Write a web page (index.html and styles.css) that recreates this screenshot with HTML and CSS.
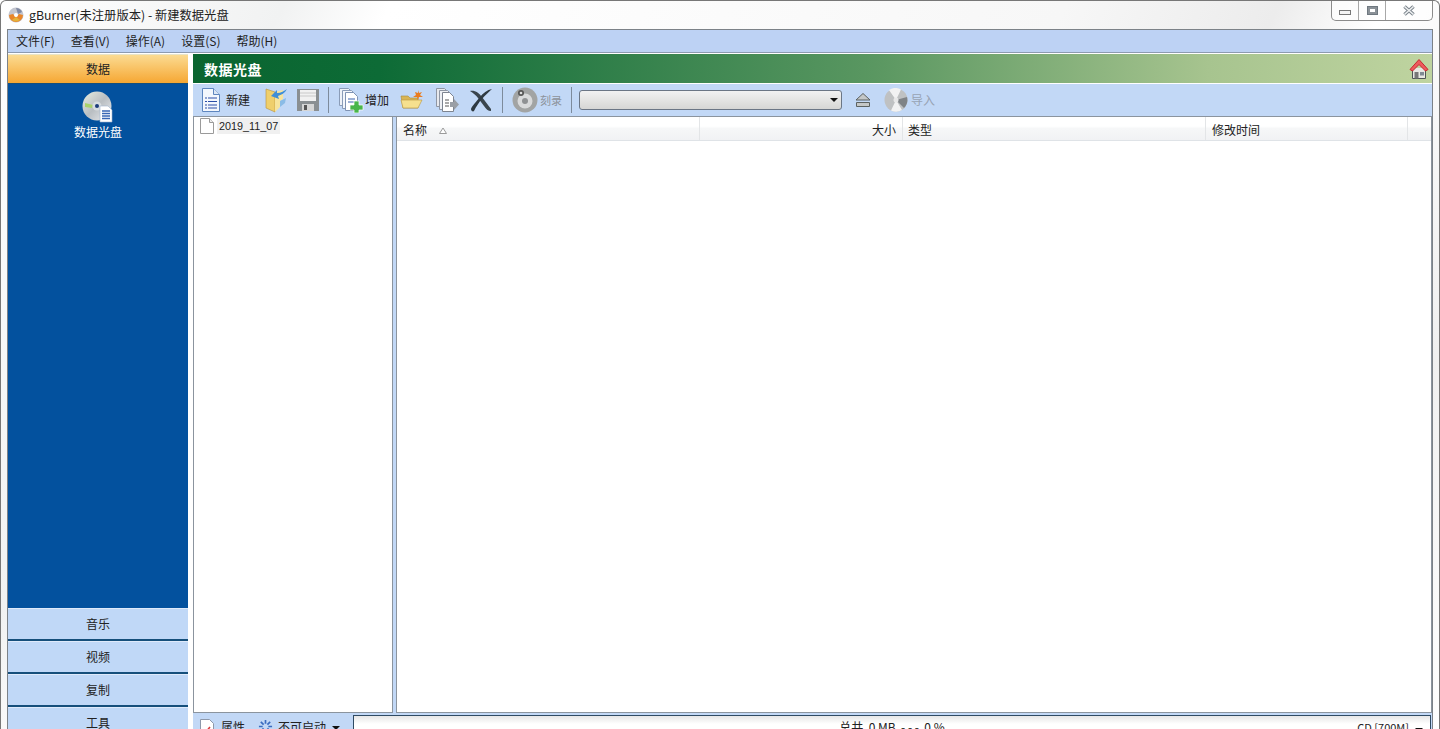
FILE: index.html
```html
<!DOCTYPE html>
<html lang="zh-CN">
<head>
    <meta charset="UTF-8">
    <title>gBurner</title>
    <link rel="stylesheet" href="styles.css">
</head>
<body>
    <div class="window">
        <div class="titlebar">
            <svg class="app-icon" viewBox="0 0 16 16" width="16" height="16">
                <circle cx="8" cy="8" r="7.500" fill="#c4c6cf"/>
                <path d="M1 8a7 7 0 0 0 14 0l-4-1-3 3-3-3z" fill="#e8862a"/>
                <path d="M4 13a7 7 0 0 0 8 0l-4-3z" fill="#e4b23a"/>
                <path d="M8 1a7 7 0 0 1 6 4l-4 2z" fill="#7f89a3"/>
                <circle cx="8" cy="8" r="2" fill="#fff"/>
            </svg>
            <span class="title-text">gBurner(未注册版本) - 新建数据光盘</span>
            <div class="win-btns">
                <div class="win-btn btn-min"><span class="glyph-min"></span></div>
                <div class="win-btn btn-max"><span class="glyph-max"></span></div>
                <div class="win-btn btn-close">
                    <svg viewBox="0 0 14 11" width="14" height="11"><path d="M2.500 1.500l9 8M11.500 1.500l-9 8" stroke="#7b848c" stroke-width="3.600" fill="none"/><path d="M2.500 1.500l9 8M11.500 1.500l-9 8" stroke="#eef0f1" stroke-width="1.600" fill="none"/></svg>
                </div>
            </div>
        </div>

        <div class="frame">
            <div class="menubar">
                <span>文件(F)</span>
                <span>查看(V)</span>
                <span>操作(A)</span>
                <span>设置(S)</span>
                <span>帮助(H)</span>
            </div>

            <div class="main">
                <div class="sidebar">
                    <div class="side-head">数据</div>
                    <div class="side-panel">
                        <svg class="disc-icon" viewBox="0 0 32 32" width="32" height="32">
                            <defs>
                                <linearGradient id="discFill" x1="0" y1="0" x2="1" y2="1">
                                    <stop offset="0" stop-color="#e9efe2"/>
                                    <stop offset="0.5" stop-color="#b9bec2"/>
                                    <stop offset="1" stop-color="#eceff2"/>
                                </linearGradient>
                            </defs>
                            <circle cx="15" cy="15" r="14.500" fill="url(#discFill)"/>
                            <path d="M3 12l8 2-1 3-7-1z" fill="#a8d26a"/>
                            <circle cx="15" cy="15" r="4.500" fill="#d8dde0"/>
                            <circle cx="15" cy="15" r="2" fill="#1d3d7a"/>
                            <path d="M18 15h8l4 4v12H18z" fill="#fff" stroke="#9fb4cf" stroke-width=".6"/>
                            <path d="M20 20h8M20 22.500h8M20 25h8M20 27.500h8" stroke="#3866b4" stroke-width="1.300"/>
                        </svg>
                        <span>数据光盘</span>
                    </div>
                    <div class="side-tab">音乐</div>
                    <div class="side-tab">视频</div>
                    <div class="side-tab">复制</div>
                    <div class="side-tab">工具</div>
                </div>

                <div class="content">
                    <div class="banner">
                        <span class="banner-title">数据光盘</span>
                        <svg class="home-icon" viewBox="0 0 20 22" width="20" height="22">
                            <path d="M3.500 10v10.500h13V10" fill="#e8e8e4" stroke="#4f5557" stroke-width="1"/>
                            <path d="M1 11.500L10 1.500l9 10-2.500 1.500L10 6.500 3.500 13z" fill="#ee5a5e" stroke="#c52a2e" stroke-width="1"/>
                            <path d="M5.500 14h4v6.500h-4z" fill="#777"/>
                            <path d="M11 14h4v3.500h-4z" fill="#7f8a94"/>
                        </svg>
                    </div>

                    <div class="toolbar">
                        <div class="tool tool-new">
                            <svg viewBox="0 0 20 26" width="20" height="26">
                                <path d="M1.500 1.500h11l6 6v17h-17z" fill="#f3f7fd" stroke="#5e86bf"/>
                                <path d="M12.500 1.500v6h6" fill="#dbe6f5" stroke="#5e86bf"/>
                                <path d="M4 11h2M7 11h9M4 14.500h2M7 14.500h9M4 18h2M7 18h9M4 21h2M7 21h9" stroke="#2c4fa8" stroke-width="1.200"/>
                            </svg>
                            <span>新建</span>
                        </div>
                        <svg class="tool-icon icon-import" viewBox="0 0 24 26" width="24" height="26">
                            <path d="M2 2l9 3v20l-9-4z" fill="#efcf6c" stroke="#b8923a" stroke-width=".6"/>
                            <path d="M11 5l8-2v9l-3 2v6l-5 5z" fill="#f7e49c"/>
                            <path d="M23 2c-2 4-6 6-9 7l1 3-8-3 6-6 0 3c4 0 7-2 10-4z" fill="#3f8ed6"/>
                            <path d="M16 14l6-3-1 5-5 4z" fill="#8bbce6"/>
                        </svg>
                        <svg class="tool-icon icon-save" viewBox="0 0 24 24" width="24" height="24">
                            <path d="M1 1h22v22H1z" fill="#8a8f92"/>
                            <path d="M4 2h16v11H4z" fill="#f1f1f1"/>
                            <path d="M4 5h16M4 8h16" stroke="#c9c9c9"/>
                            <path d="M6 16h12v7H6z" fill="#d6d6d6"/>
                            <path d="M8 17h3v5H8z" fill="#555"/>
                        </svg>
                        <span class="tool-sep sep-a"></span>
                        <div class="tool tool-add">
                            <svg viewBox="0 0 27 26" width="27" height="26">
                                <path d="M1.500 1.500h9l3 3v14h-12z" fill="#eef2f8" stroke="#8a9cb8"/>
                                <path d="M4.500 3.500h9l3 3v15h-12z" fill="#f3f6fb" stroke="#8a9cb8"/>
                                <path d="M7.500 5.500h8l4 4v14h-12z" fill="#fff" stroke="#7f93b3"/>
                                <path d="M10 12h7M10 15h7" stroke="#3b62ae"/>
                                <path d="M16 14h5v4h4v5h-4v3h-5v-3h-4v-5h4z" fill="#49b64a" stroke="#fff" stroke-width=".7"/>
                            </svg>
                            <span>增加</span>
                        </div>
                        <svg class="tool-icon icon-folder" viewBox="0 0 24 20" width="24" height="20">
                            <path d="M1 6h7l2 2h8v10H3z" fill="#d9b554" stroke="#a98b3a" stroke-width=".6"/>
                            <path d="M3 18L1 10h17l4 0-4 8z" fill="#f6e08e" stroke="#b8963f" stroke-width=".6"/>
                            <path d="M18 0l1 3 3-1-2 3 3 2-4 0-1 3-1-3-4 0 3-2-1-3 3 1z" fill="#ea7c1f"/>
                        </svg>
                        <svg class="tool-icon icon-move" viewBox="0 0 24 26" width="24" height="26">
                            <path d="M1.500 1.500h8l3 3v15h-11z" fill="#e7e9ee" stroke="#8f96a3"/>
                            <path d="M4.500 3.500h8l3 3v16h-11z" fill="#eef0f4" stroke="#8f96a3"/>
                            <path d="M7.500 5.500h7l4 4v15h-11z" fill="#fff" stroke="#7d8490"/>
                            <path d="M10 13h4M10 16h4M10 19h4" stroke="#555"/>
                            <path d="M15 15h4v-3l5 5.500-5 5.500v-3h-4z" fill="#9a9fa6"/>
                        </svg>
                        <svg class="tool-icon icon-del" viewBox="0 0 24 24" width="24" height="24">
                            <path d="M1 3c5-1 9 2 12 6l9 12 0 2c-3 0-5-2-7-5L9 10C7 7 4 5 1 3z" fill="#3a454d"/>
                            <path d="M23 1c-5 1-9 4-12 8-4 5-8 9-9 12 0 2 2 3 3 2 2-4 5-9 8-12 3-4 7-7 10-10z" fill="#2f3a42"/>
                        </svg>
                        <span class="tool-sep sep-b"></span>
                        <div class="tool tool-burn">
                            <svg viewBox="0 0 26 26" width="26" height="26">
                                <circle cx="13" cy="13" r="12.500" fill="#a2a4a4"/>
                                <circle cx="13" cy="14" r="7.500" fill="#d9dadb"/>
                                <circle cx="13" cy="14" r="3" fill="#8f9193"/>
                                <circle cx="9" cy="6" r="3" fill="#555"/>
                                <circle cx="9" cy="6" r="1.300" fill="#ddd"/>
                            </svg>
                            <span>刻录</span>
                        </div>
                        <span class="tool-sep sep-c"></span>
                        <div class="combo"><span class="combo-arrow"></span></div>
                        <svg class="icon-eject" viewBox="0 0 16 16" width="16" height="16">
                            <path d="M8 1.500l7 6.500H1z" fill="#c4c7c7" stroke="#5b6160"/>
                            <path d="M1.500 10.500h13v4h-13z" fill="#c4c7c7" stroke="#5b6160"/>
                        </svg>
                        <div class="tool tool-imp">
                            <svg viewBox="0 0 24 24" width="24" height="24">
                                <circle cx="12" cy="12" r="11.500" fill="#bfc1c2"/>
                                <path d="M12 12L5 2a11.500 11.500 0 0 1 12-.5zM12 12l6 10a11.500 11.500 0 0 1-11 .5z" fill="#f2f2f2"/>
                                <path d="M12 12L23 9a11.500 11.500 0 0 1-3 11z" fill="#7f8386"/>
                                <circle cx="12" cy="12" r="2.500" fill="#e8e8e8"/>
                            </svg>
                            <span>导入</span>
                        </div>
                    </div>

                    <div class="panes">
                        <div class="tree">
                            <div class="tree-row">
                                <svg viewBox="0 0 14 16" width="14" height="16">
                                    <path d="M.5.500h9l4 4v11H.500z" fill="#fff" stroke="#9a9a9a"/>
                                    <path d="M9.500.500v4h4" fill="#eee" stroke="#9a9a9a"/>
                                </svg>
                                <span class="tree-label">2019_11_07</span>
                            </div>
                        </div>
                        <div class="list">
                            <div class="list-head">
                                <div class="col col-name">名称
                                    <svg class="sort-mark" viewBox="0 0 8 7" width="8" height="7"><path d="M4 1L7.500 6.500h-7z" fill="#fff" stroke="#9a9a9a"/></svg>
                                </div>
                                <div class="col col-size">大小</div>
                                <div class="col col-type">类型</div>
                                <div class="col col-time">修改时间</div>
                                <div class="col col-rest"></div>
                            </div>
                        </div>
                    </div>

                    <div class="statusbar">
                        <div class="status-tools">
                            <svg viewBox="0 0 14 16" width="14" height="16">
                                <path d="M.5.500h9l4 4v11H.500z" fill="#fff" stroke="#8d98aa"/>
                                <path d="M3 11l2 3 5-6" stroke="#d83b3b" stroke-width="1.600" fill="none"/>
                            </svg>
                            <span class="status-prop">属性</span>
                            <svg class="status-spark" viewBox="0 0 16 16" width="15" height="15">
                                <path d="M8 1v4M8 11v4M1 8h4M11 8h4M3 3l3 3M10 10l3 3M13 3l-3 3M6 10l-3 3" stroke="#3a6bc0" stroke-width="1.800"/>
                            </svg>
                            <span class="status-boot">不可启动</span>
                            <span class="status-arrow"></span>
                        </div>
                        <div class="capacity">
                            <span class="capacity-text">总共&nbsp; 0 MB&nbsp; - - -&nbsp; 0 %</span>
                            <span class="capacity-type">CD [700M]<span class="status-arrow"></span></span>
                        </div>
                    </div>
                </div>
            </div>
        </div>
    </div>
</body>
</html>
```

FILE: styles.css
```css
html, body {
    margin: 0;
    padding: 0;
    height: 729px;
    overflow: hidden;
}
body {
    font-family: "Noto Sans CJK SC", "Liberation Sans", sans-serif;
    font-size: 12px;
    color: #111;
    background: #fff;
}
.window {
    height: 729px;
    box-sizing: border-box;
    display: flex;
    flex-direction: column;
    border-left: 1px solid #777;
    border-right: 1px solid #777;
    border-top: 1px solid #777;
    border-radius: 6px 6px 0 0;
    background: linear-gradient(115deg, #fff 0%, #f1f2f2 16%, #fff 22%, #f7f7f7 60%, #ececec 72%, #fff 78%, #f0f0f0 90%, #fff 100%);
    overflow: hidden;
}
.titlebar {
    height: 28px;
    flex: none;
    display: flex;
    align-items: center;
    padding-left: 7px;
    position: relative;
}
.app-icon {
    margin-right: 5px;
}
.title-text {
    color: #222;
    font-size: 12.3px;
    white-space: nowrap;
}
.win-btns {
    margin-left: auto;
    margin-right: 6px;
    margin-top: -9px;
    height: 19px;
    display: flex;
    border: 1px solid #8b8b8b;
    border-top: none;
    border-radius: 0 0 5px 5px;
    background: rgba(255, 255, 255, 0.6);
}
.win-btn {
    box-sizing: border-box;
    display: flex;
    align-items: center;
    justify-content: center;
}
.btn-min {
    width: 27px;
    border-right: 1px solid #a8a8a8;
}
.btn-max {
    width: 27px;
    border-right: 1px solid #a8a8a8;
}
.btn-close {
    width: 46px;
}
.glyph-min {
    width: 10px;
    height: 3px;
    margin-top: 5px;
    border: 1px solid #777;
    background: #f4f4f4;
}
.glyph-max {
    width: 5px;
    height: 3px;
    border: 3px solid #8b9298;
    outline: 1px solid #6f7880;
    outline-offset: -1px;
    background: #fff;
}
.frame {
    flex: 1;
    min-height: 0;
    display: flex;
    flex-direction: column;
    margin: 0 6px;
    border-left: 1px solid #7c8288;
    border-top: 1px solid #7c8288;
    border-right: 1px solid #7c8288;
    background: #fff;
}
.menubar {
    height: 22px;
    flex: none;
    box-sizing: content-box;
    display: flex;
    align-items: flex-start;
    gap: 16px;
    padding-left: 8px;
    line-height: 21px;
    background: #bdd2f4;
    border-bottom: 1px solid #8d9bb0;
    color: #222;
}
.main {
    flex: 1;
    min-height: 0;
    display: flex;
    gap: 5px;
    padding-top: 1px;
}

/* left side */
.sidebar {
    width: 180px;
    flex: none;
    display: flex;
    flex-direction: column;
    background: #154f7b;
}
.side-head {
    height: 29px;
    flex: none;
    box-sizing: border-box;
    padding-bottom: 1px;
    margin-bottom: 1px;
    display: flex;
    align-items: center;
    justify-content: center;
    background: linear-gradient(#fbdb92, #f6a733);
    border-top: 1px solid #e8e4c8;
    color: #222;
}
.side-panel {
    height: 524px;
    flex: none;
    box-sizing: border-box;
    padding-top: 7px;
    display: flex;
    flex-direction: column;
    align-items: center;
    background: #03519e;
    color: #fff;
    line-height: 16px;
}
.disc-icon {
    margin-bottom: 1px;
}
.side-tab {
    height: 31px;
    flex: none;
    box-sizing: border-box;
    padding-bottom: 2px;
    margin-bottom: 2px;
    display: flex;
    align-items: center;
    justify-content: center;
    background: #c0d8f7;
    border-top: 1px solid #dfeafa;
    color: #222;
}

/* right side */
.content {
    flex: 1;
    min-width: 0;
    display: flex;
    flex-direction: column;
}
.banner {
    height: 29px;
    flex: none;
    display: flex;
    align-items: center;
    justify-content: space-between;
    padding: 0 3px 0 11px;
    background: linear-gradient(90deg, #0a6530 0%, #0d6b36 15%, #5a9761 55%, #a7c48f 82%, #bfd4a0 100%);
    border-bottom: 1px solid #fff;
}
.banner-title {
    color: #fff;
    font-size: 14px;
    font-weight: bold;
    letter-spacing: 0.5px;
}
.toolbar {
    height: 33px;
    flex: none;
    display: flex;
    align-items: center;
    background: #c2d8f6;
    box-sizing: border-box;
    border-bottom: 1px solid #8b949e;
    padding: 0 0 1px 8px;
}
.tool {
    display: flex;
    align-items: center;
    color: #222;
}
.tool-new span {
    margin-left: 5px;
}
.tool-icon {
    flex: none;
}
.icon-import {
    margin-left: 14px;
}
.icon-save {
    margin-left: 8px;
}
.tool-sep {
    width: 1px;
    height: 26px;
    background: #7d8b9c;
    flex: none;
}
.sep-a {
    margin-left: 8px;
}
.tool-add {
    margin-left: 9px;
}
.icon-folder {
    margin-left: 11px;
}
.icon-move {
    margin-left: 11px;
}
.icon-del {
    margin-left: 10px;
}
.sep-b {
    margin-left: 9px;
}
.tool-burn {
    margin-left: 9px;
    color: #8d939b;
}
.tool-burn span {
    margin-left: 2px;
    font-size: 11px;
}
.sep-c {
    margin-left: 9px;
}
.combo {
    width: 263px;
    height: 20px;
    margin-left: 7px;
    box-sizing: border-box;
    border: 1px solid #6b7685;
    border-radius: 3px;
    background: linear-gradient(#f2f2f2, #d6d6d4);
    display: flex;
    align-items: center;
    justify-content: flex-end;
    padding-right: 3px;
}
.combo-arrow, .status-arrow {
    display: inline-block;
    width: 0;
    height: 0;
    border-left: 4px solid transparent;
    border-right: 4px solid transparent;
    border-top: 4px solid #111;
}
.icon-eject {
    margin-left: 13px;
}
.tool-imp {
    margin-left: 13px;
    color: #98a3b3;
}
.tool-imp span {
    margin-left: 3px;
}
.panes {
    flex: 1;
    min-height: 0;
    display: flex;
    gap: 3px;
    background: #c2d8f6;
}
.tree {
    width: 200px;
    flex: none;
    box-sizing: border-box;
    background: #fff;
    border-left: 1px solid #8b949e;
    border-right: 1px solid #8b949e;
    border-bottom: 1px solid #8b949e;
    padding: 1px 0 0 6px;
}
.tree-row {
    display: flex;
    align-items: center;
    height: 16px;
}
.tree-label {
    margin-left: 3px;
    padding: 0 2px;
    background: #f0f0f0;
    font-family: "Liberation Sans", sans-serif;
    font-size: 10.8px;
    line-height: 16px;
    color: #222;
}
.list {
    flex: 1;
    min-width: 0;
    background: #fff;
    border-left: 1px solid #8b949e;
    border-right: 1px solid #8b949e;
    border-bottom: 1px solid #8b949e;
}
.list-head {
    height: 24px;
    box-sizing: border-box;
    display: flex;
    background: linear-gradient(#fff 0%, #fff 40%, #f6f7f8 50%, #f1f2f4 100%);
    border-bottom: 1px solid #dfe3e7;
    color: #222;
}
.col {
    box-sizing: border-box;
    display: flex;
    align-items: center;
    border-right: 1px solid #e3e5e7;
    padding: 2px 5px 0;
}
.col-name {
    width: 303px;
    padding-left: 6px;
}
.col-size {
    width: 203px;
    justify-content: flex-end;
    padding-right: 6px;
}
.col-type {
    width: 303px;
}
.col-time {
    width: 202px;
    padding-left: 6px;
}
.col-rest {
    flex: 1;
    border-right: none;
}
.sort-mark {
    margin-left: 12px;
    margin-top: 2px;
}
.statusbar {
    height: 16px;
    flex: none;
    display: flex;
    background: #c2d8f6;
    overflow: hidden;
}
.status-tools {
    width: 160px;
    flex: none;
    display: flex;
    align-items: flex-start;
    padding: 6px 0 0 7px;
    box-sizing: border-box;
    line-height: 16px;
    color: #222;
}
.status-prop {
    margin-left: 7px;
}
.status-spark {
    margin-left: 13px;
}
.status-boot {
    margin-left: 5px;
}
.status-tools .status-arrow {
    margin: 7px 0 0 6px;
}
.capacity {
    flex: 1;
    min-width: 0;
    margin-top: 2px;
    margin-right: 1px;
    height: 30px;
    box-sizing: border-box;
    position: relative;
    border: 1px solid #2f4a63;
    background: linear-gradient(#e6e6e6, #fff 8px);
    text-align: center;
    line-height: 16px;
    padding-top: 3px;
    color: #222;
}
.capacity-type {
    position: absolute;
    right: 7px;
    top: 3px;
    font-size: 11px;
}
.capacity-type .status-arrow {
    margin-left: 6px;
}
```
